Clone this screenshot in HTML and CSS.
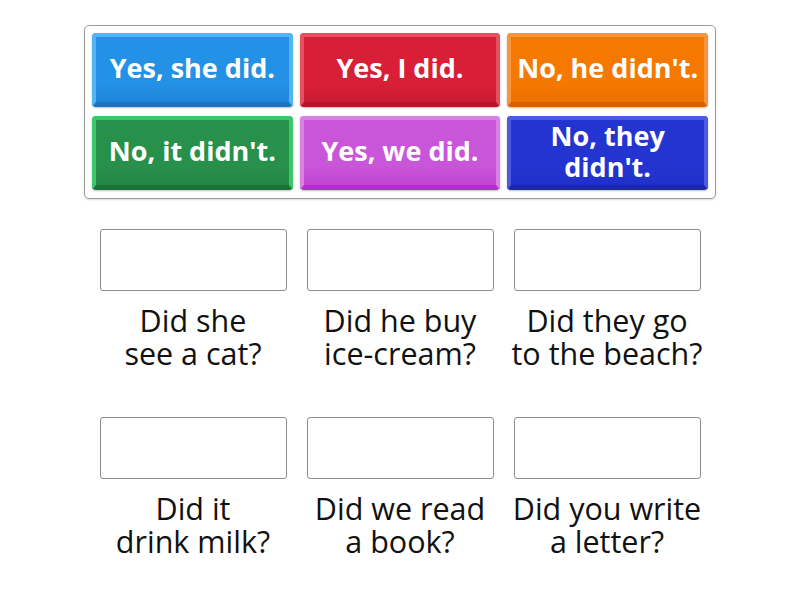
FILE: index.html
```html
<!DOCTYPE html>
<html lang="en">
<head>
    <meta charset="UTF-8">
    <meta name="viewport" content="width=device-width, initial-scale=1.0">
    <title>Match up</title>
    <link rel="stylesheet" href="styles.css">
</head>
<body>
    <div class="tile-bank">
        <div class="tile blue"><span>Yes, she did.</span></div>
        <div class="tile red"><span>Yes, I did.</span></div>
        <div class="tile orange"><span>No, he didn't.</span></div>
        <div class="tile green"><span>No, it didn't.</span></div>
        <div class="tile magenta"><span>Yes, we did.</span></div>
        <div class="tile navy"><span>No, they didn't.</span></div>
    </div>

    <div class="questions">
        <div class="question">
            <div class="drop-box"></div>
            <p>Did she<br>see a cat?</p>
        </div>
        <div class="question">
            <div class="drop-box"></div>
            <p>Did he buy<br>ice-cream?</p>
        </div>
        <div class="question">
            <div class="drop-box"></div>
            <p>Did they go<br>to the beach?</p>
        </div>
        <div class="question">
            <div class="drop-box"></div>
            <p>Did it<br>drink milk?</p>
        </div>
        <div class="question">
            <div class="drop-box"></div>
            <p>Did we read<br>a book?</p>
        </div>
        <div class="question">
            <div class="drop-box"></div>
            <p>Did you write<br>a letter?</p>
        </div>
    </div>
</body>
</html>
```

FILE: styles.css
```css
body {
    font-family: "Open Sans", "Liberation Sans", sans-serif;
    margin: 0;
    padding: 0;
    background: #fff;
    color: #111;
}

.tile-bank {
    width: 632px;
    height: 174px;
    box-sizing: border-box;
    margin: 25px auto 0;
    padding: 7px 7px;
    border: 1px solid #9a9a9a;
    border-radius: 5px;
    box-shadow: 0 1px 2px rgba(0, 0, 0, 0.15);
    display: grid;
    grid-template-columns: repeat(3, 1fr);
    gap: 8px 7px;
}

.tile {
    box-sizing: border-box;
    height: 74px;
    border-radius: 4px;
    border: 4px solid var(--light);
    border-bottom: 5px solid var(--dark);
    background: linear-gradient(var(--main), var(--main) 70%, var(--low));
    box-shadow: 0 1px 2px rgba(0, 0, 0, 0.25);
    display: flex;
    align-items: center;
    justify-content: center;
    text-align: center;
    color: #fff;
    font-weight: bold;
    font-size: 27px;
    line-height: 31px;
    padding: 0 4px 4px;
}

.blue { --main: #2392e6; --low: #1f86dc; --light: #55b3f1; --dark: #1b73c4; }
.red { --main: #d91f37; --low: #cc1b31; --light: #e35162; --dark: #b01629; }
.orange { --main: #f57900; --low: #ee7000; --light: #f8963f; --dark: #d46200; }
.green { --main: #27914b; --low: #238744; --light: #3cc869; --dark: #1c733a; }
.magenta { --main: #c956d9; --low: #c146d2; --light: #d880e4; --dark: #b032c4; }
.navy { --main: #2434d1; --low: #2030c8; --light: #4b5ce2; --dark: #1a28a6; }

.questions {
    width: 601px;
    margin: 30px auto 0;
    display: grid;
    grid-template-columns: repeat(3, 187px);
    column-gap: 20px;
    row-gap: 47px;
}

.drop-box {
    box-sizing: border-box;
    height: 62px;
    border: 1px solid #8c8c8c;
    border-radius: 3px;
    background: #fff;
}

.question p {
    margin: 13px -10px 0;
    text-align: center;
    font-size: 30.5px;
    line-height: 33px;
    color: #111;
}
```
